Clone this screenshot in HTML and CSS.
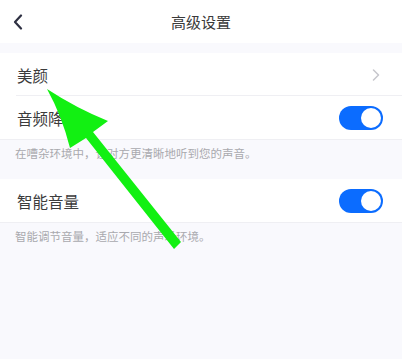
FILE: index.html
```html
<!DOCTYPE html>
<html lang="zh">
<head>
<meta charset="utf-8">
<link rel="stylesheet" href="styles.css">
</head>
<body>
<div class="page">
  <header class="topbar">
    <span class="back">
      <svg width="10" height="16" viewBox="0 0 10 16"><path d="M8 1.5 L2 8 L8 14.5" fill="none" stroke="#2e3042" stroke-width="2.2" stroke-linecap="round" stroke-linejoin="round"/></svg>
    </span>
    <h1 class="title">高级设置</h1>
    <span></span>
  </header>
  <div class="gap"></div>
  <section class="group">
    <div class="row divided">
      <span class="label">美颜</span>
      <svg class="chev" width="8" height="12" viewBox="0 0 8 12"><path d="M1.5 1 L6.5 6 L1.5 11" fill="none" stroke="#c6c6cc" stroke-width="1.5" stroke-linecap="round" stroke-linejoin="round"/></svg>
    </div>
    <div class="row">
      <span class="label">音频降噪</span>
      <span class="switch"><span class="knob"></span></span>
    </div>
  </section>
  <p class="desc first">在嘈杂环境中，让对方更清晰地听到您的声音。</p>
  <section class="group">
    <div class="row">
      <span class="label">智能音量</span>
      <span class="switch"><span class="knob"></span></span>
    </div>
  </section>
  <p class="desc">智能调节音量，适应不同的声场环境。</p>
  <svg class="arrow" width="402" height="359" viewBox="0 0 402 359">
    <path d="M47 89 Q76 108 108 121 L93 132 L181 242 L174 249 L86 138 L70 148 Q62 116 47 89 Z" fill="#12f012"/>
  </svg>
</div>
</body>
</html>
```
FILE: styles.css
```css
* { box-sizing: border-box; }
html, body { margin: 0; padding: 0; }
body {
  background: #f9f9fd;
  font-family: "Noto Sans CJK SC", "Noto Sans", sans-serif;
  width: 402px;
  height: 359px;
  overflow: hidden;
}
.page { position: relative; width: 402px; height: 359px; }
.topbar {
  height: 43px;
  background: #fff;
  display: grid;
  grid-template-columns: 44px 1fr 44px;
  align-items: center;
}
.back { display: flex; padding-left: 13px; padding-top: 0px; }
.title {
  margin: 0;
  text-align: center;
  font-size: 15px;
  font-weight: 400;
  color: #3a3a3a;
}
.gap { height: 10px; }
.group { background: #fff; }
.row {
  height: 43px;
  display: flex;
  align-items: center;
  justify-content: space-between;
  padding: 0 19px 0 17px;
  position: relative;
}
.row.divided::after {
  content: "";
  position: absolute;
  left: 16px; right: 0; bottom: 0;
  height: 1px;
  background: #efeff3;
}
.label { font-size: 15.5px; color: #3c3c3c; }
.chev { margin-right: 3px; }
.switch {
  width: 44px;
  height: 24px;
  border-radius: 12px;
  background: #0b6cff;
  display: flex;
  align-items: center;
  justify-content: flex-end;
  padding-right: 2px;
}
.knob { width: 20px; height: 20px; border-radius: 50%; background: #fff; }
.desc {
  margin: 0;
  padding: 5px 15px 0;
  height: 40px;
  font-size: 11.5px;
  line-height: 17px;
  color: #a9a9ae;
  border-top: 1px solid #efeff3;
}
.arrow { position: absolute; left: 0; top: 0; pointer-events: none; }
```
